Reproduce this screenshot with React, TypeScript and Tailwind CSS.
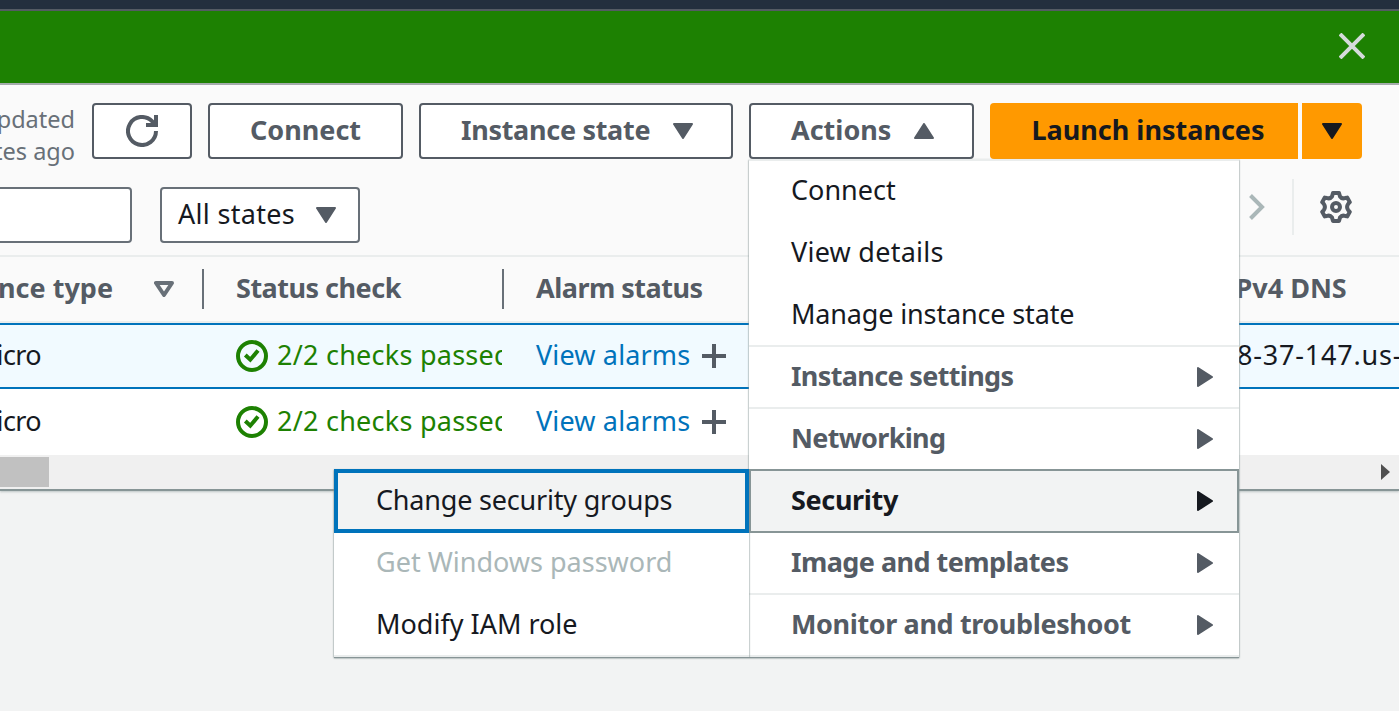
import React from "react";
import { clsx } from "clsx";

function Caret({ className }: { className?: string }) {
  return (
    <svg viewBox="0 0 20 16" className={clsx("h-4 w-5 shrink-0", className)} fill="currentColor" stroke="currentColor" strokeWidth="2" strokeLinejoin="round">
      <path d="M1 1H19L10 15Z" />
    </svg>
  );
}

function RefreshIcon() {
  return (
    <svg viewBox="0 0 32 32" className="size-8" fill="none" stroke="currentColor" strokeWidth="4">
      <path d="M30 16A14 14 0 1 1 26 6.200L28.500 9" />
      <path d="M30 0V10H20" />
    </svg>
  );
}

function GearIcon() {
  return (
    <svg viewBox="0 0 32 32" className="size-8" fill="none" stroke="currentColor" strokeWidth="4" strokeLinejoin="round">
      <path d="M13 2H19L20 5.500Q22 8.300 25.200 7L27.200 6.600L29.800 11.200L28.200 12.800Q26 16 28.200 19.200L29.800 20.800L27.200 25.400L25.200 25Q22 23.700 20 26.500L19 30H13L12 26.500Q10 23.700 6.800 25L4.800 25.400L2.200 20.800L3.800 19.200Q6 16 3.800 12.800L2.200 11.200L4.800 6.600L6.800 7Q10 8.300 12 5.500Z" />
      <circle cx="16" cy="16" r="4" />
    </svg>
  );
}

function CheckIcon() {
  return (
    <svg viewBox="0 0 32 32" className="size-8 shrink-0" fill="none" stroke="currentColor" strokeWidth="4">
      <circle cx="16" cy="16" r="14" />
      <path d="M9.300 15L14.300 19.700L22 10.500" />
    </svg>
  );
}

function PlusIcon() {
  return (
    <svg viewBox="0 0 24 24" className="size-6 shrink-0 text-[#545b64]" stroke="currentColor" strokeWidth="4">
      <path d="M12 0V24M0 12H24" />
    </svg>
  );
}

function Button({ children, className }: { children: React.ReactNode; className: string }) {
  return (
    <button className={clsx("flex h-14 shrink-0 items-center rounded border-2 border-[#545b64] bg-white font-bold whitespace-nowrap text-[#545b64]", className)}>
      {children}
    </button>
  );
}

function Row({ selected, dns }: { selected?: boolean; dns?: string }) {
  return (
    <div className={clsx("flex h-[66px] shrink-0 items-center", selected ? "border-y-2 border-[#0073bb] bg-[#f1faff]" : "bg-white")}>
      <div className="flex w-[236px] shrink-0 justify-start overflow-hidden">
        <span className="-ml-[31px] w-[72px] pb-0.5 text-right tracking-[-0.6px]">micro</span>
      </div>
      <div className="flex w-[266px] shrink-0 items-center gap-[9px] overflow-hidden whitespace-nowrap text-[#1d8102]">
        <CheckIcon />
        <span className="pb-0.5 tracking-[0.25px]">2/2 checks passed</span>
      </div>
      <div className="ml-[34px] flex w-[701px] shrink-0 items-center text-[#0073bb]">
        <span className="w-[166px] pb-0.5 tracking-[0.15px]">View alarms</span>
        <PlusIcon />
      </div>
      <div className="pb-0.5 tracking-[0.8px] whitespace-nowrap">{dns}</div>
    </div>
  );
}

type Item = { label: string; group?: boolean; active?: boolean; className?: string };

const actions: Item[] = [
  { label: "Connect", className: "pb-0.5" },
  { label: "View details", className: "tracking-[0.25px]" },
  { label: "Manage instance state", className: "tracking-[-0.15px]" },
  { label: "Instance settings", group: true, className: "pb-0.5 tracking-[-0.65px]" },
  { label: "Networking", group: true, className: "pb-0.5 tracking-[-0.7px]" },
  { label: "Security", group: true, active: true, className: "pb-0.5 tracking-[-0.35px]" },
  { label: "Image and templates", group: true, className: "pb-0.5 tracking-[-0.55px]" },
  { label: "Monitor and troubleshoot", group: true, className: "pb-0.5 tracking-[-0.38px]" },
];

function ActionItem({ item }: { item: Item }) {
  return (
    <div
      className={clsx(
        "flex items-center justify-between whitespace-nowrap first:h-[60px]",
        item.group && "font-bold",
        item.active
          ? "-mb-0.5 h-16 border-2 border-[#879596] bg-[#f2f3f3] pr-[22px] pl-10 text-[#16191f]"
          : item.group
            ? "h-[62px] border-t-2 border-[#eaeded] pr-6 pl-[42px] text-[#545b64]"
            : "h-[62px] pl-[42px]",
        item.label === "Image and templates" && "border-t-transparent",
      )}
    >
      <span className={item.className}>{item.label}</span>
      {item.group && <Caret className="-rotate-90" />}
    </div>
  );
}

export default function App() {
  return (
    <div className="relative flex h-[711px] w-[1399px] flex-col overflow-hidden bg-[#f2f3f3] font-['Noto_Sans',sans-serif] text-[27px] leading-8 text-[#16191f]">
      <div className="h-[11px] shrink-0 border-b-2 border-[#545b64] bg-[#232f3e]" />
      <div className="flex h-[72px] shrink-0 items-center justify-end bg-[#1d8102] pr-[34px] pb-0.5 text-[#d5dbdb]">
        <svg viewBox="0 0 26 26" className="size-[26px]" stroke="currentColor" strokeWidth="4">
          <path d="M1 1L25 25M25 1L1 25" />
        </svg>
      </div>
      <div className="h-0.5 shrink-0 bg-[#a5adad]" />
      <div className="flex h-[406px] shrink-0 flex-col border-b-2 border-[#879596] bg-[#fafafa] shadow-[0_1px_2px_#87959680]">
        <div className="mt-[18px] flex h-14 shrink-0 items-center">
          <div className="flex w-[92px] shrink-0 flex-col items-end overflow-hidden pt-[7px] pr-[17px] text-[23.500px] whitespace-nowrap text-[#687078]">
            <span>Last updated</span>
            <span>2 minutes ago</span>
          </div>
          <Button className="w-[100px] justify-center"><RefreshIcon /></Button>
          <Button className="ml-4 w-[195px] justify-center pb-0.5">Connect</Button>
          <Button className="ml-4 w-[314px] justify-between pr-[38px] pl-10">
            <span className="pb-0.5 tracking-[-0.3px]">Instance state</span><Caret />
          </Button>
          <Button className="ml-4 w-[225px] justify-between pr-[38px] pl-10">
            <span className="pb-0.5">Actions</span><Caret className="rotate-180" />
          </Button>
          <button className="ml-4 h-14 w-[308px] shrink-0 rounded-l bg-[#ff9900] pb-0.5 pl-2 font-bold whitespace-nowrap">Launch instances</button>
          <button className="ml-1 flex h-14 w-[60px] shrink-0 items-center justify-center rounded-r bg-[#ff9900]"><Caret /></button>
        </div>
        <div className="flex h-[98px] shrink-0 items-start border-b-2 border-[#eaeded] pt-7">
          <div className="-ml-2 h-14 w-[140px] shrink-0 rounded border-2 border-[#687078] bg-white" />
          <div className="ml-7 flex h-14 w-[200px] shrink-0 items-center justify-between rounded border-2 border-[#687078] bg-white pr-[22px] pl-4 whitespace-nowrap">
            <span className="pb-0.5 tracking-[0.3px]">All states</span><Caret className="text-[#545b64]" />
          </div>
          <div className="-mt-2 ml-[889px] flex h-14 shrink-0 items-center">
            <svg viewBox="0 0 16 26" className="h-[26px] w-4 text-[#aab7b8]" fill="none" stroke="currentColor" strokeWidth="4">
              <path d="M1.500 1.500L13 13L1.500 24.500" />
            </svg>
            <div className="ml-[27px] h-14 w-0.5 bg-[#eaeded]" />
            <div className="ml-[26px] text-[#545b64]"><GearIcon /></div>
          </div>
        </div>
        <div className="flex h-[66px] shrink-0 items-center border-b-2 border-[#eaeded] font-bold whitespace-nowrap text-[#545b64]">
          <div className="flex w-[202px] shrink-0 items-center justify-between overflow-hidden pr-[28px]">
            <div className="flex w-[113px] justify-end pb-0.5"><span>Instance type</span></div>
            <svg viewBox="0 0 20 16" className="h-4 w-5 text-[#687078]" fill="none" stroke="currentColor" strokeWidth="4" strokeLinejoin="round">
              <path d="M2 2H18L10 14Z" />
            </svg>
          </div>
          <div className="h-10 w-0.5 shrink-0 bg-[#687078]" />
          <div className="w-[298px] shrink-0 pb-0.5 pl-8 tracking-[-0.5px]">Status check</div>
          <div className="h-10 w-0.5 shrink-0 bg-[#687078]" />
          <div className="w-[721px] shrink-0 pb-0.5 pl-8 tracking-[-0.5px]">Alarm status</div>
          <div className="pb-0.5">IPv4 DNS</div>
        </div>
        <Row selected dns="8-37-147.us-east-2" />
        <Row />
        <div className="flex h-[34px] shrink-0 items-center justify-between bg-[#f0f0f0] pr-[9px]">
          <div className="h-[30px] w-[49px] bg-[#c1c1c1]" />
          <svg viewBox="0 0 9 16" className="h-4 w-[9px]" fill="#505050"><path d="M0 0L9 8L0 16Z" /></svg>
        </div>
      </div>

      <div className="absolute top-[159px] left-[749px] w-[490px] border-y-2 border-[#eaeded] bg-white shadow-[0_1px_2px_#879596,0_1px_1px_#879596]">
        {actions.map((item) => <ActionItem key={item.label} item={item} />)}
      </div>
      <div className="absolute top-[469px] left-[334px] w-[415px] border-b-2 border-[#eaeded] bg-white whitespace-nowrap shadow-[0_1px_2px_#879596,0_1px_1px_#879596]">
        <div className="flex h-16 items-center border-4 border-[#0073bb] bg-[#f2f3f3] pl-[38px]"><span className="pb-0.5 tracking-[-0.2px]">Change security groups</span></div>
        <div className="flex h-[60px] items-center pl-[42px] text-[#aab7b8]"><span className="pb-0.5">Get Windows password</span></div>
        <div className="flex h-[62px] items-center pl-[42px]">Modify IAM role</div>
      </div>
    </div>
  );
}
